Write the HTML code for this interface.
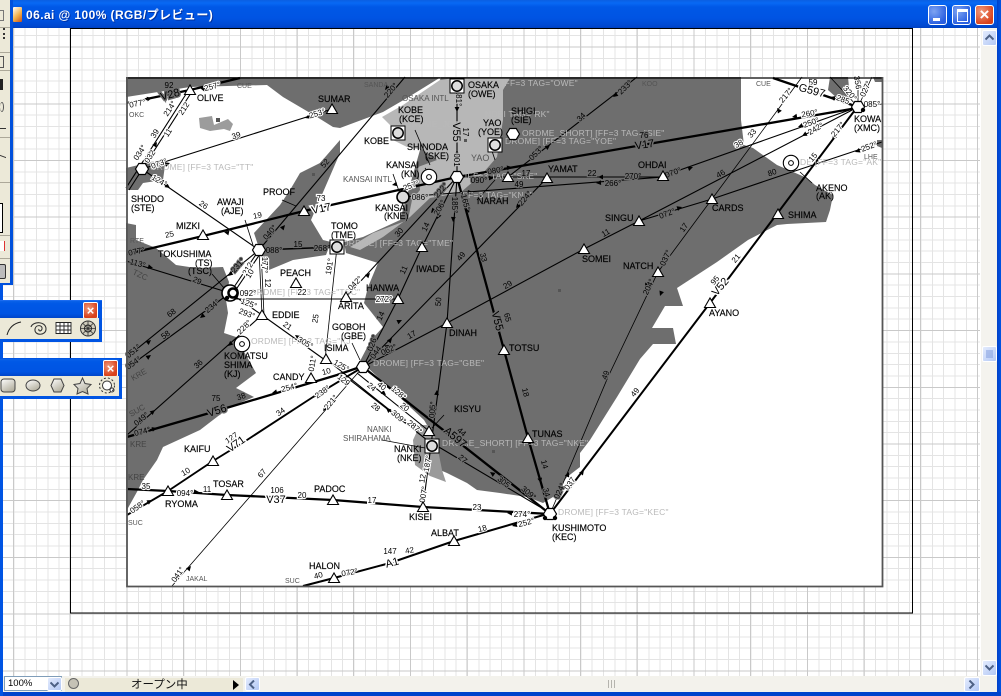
<!DOCTYPE html>
<html><head><meta charset="utf-8"><style>
html,body{margin:0;padding:0;background:#fff}
#r{position:relative;width:1001px;height:696px;overflow:hidden;font-family:"Liberation Sans","Noto Sans CJK JP",sans-serif}
#r>div{position:absolute}
svg{position:absolute;left:0;top:0}
.n{font:9px "Liberation Sans",sans-serif;fill:#000;stroke:#000;stroke-width:.15}
.g{font:8px "Liberation Sans",sans-serif;fill:#555}
.s{font:8px "Liberation Sans",sans-serif;fill:#000;text-anchor:middle;stroke:#fff;stroke-width:2.2;paint-order:stroke}
.v{font:11px "Liberation Sans",sans-serif;fill:#000;text-anchor:middle;stroke:#fff;stroke-width:3;paint-order:stroke}
.d{stroke:#6e6e6e}
.x{font:8.5px "Liberation Sans",sans-serif;fill:#b9b9b9;letter-spacing:.2px}
.th{stroke:#000;stroke-width:2.3;fill:none}
.m{stroke:#000;stroke-width:1.1;fill:none}
.f{stroke:#000;stroke-width:.8;fill:none}
.pt{position:absolute;left:0;background:linear-gradient(#0a62e8,#0058e6 15%,#0054e3 70%,#0042c4);height:18px}
.cl{position:absolute;width:13px;height:15px;border:1px solid #fff;border-radius:2px;background:radial-gradient(circle at 35% 35%,#f09a7c,#d9421c 70%);color:#fff;font:bold 13px/15px "Liberation Sans",sans-serif;text-align:center}
.bt{position:absolute;width:19px;height:20px;border:1px solid #fff;border-radius:3px;box-sizing:border-box}
.sb{position:absolute;border:1px solid #fff;border-radius:2px;background:linear-gradient(135deg,#e3ebfd,#b3c8f5);box-sizing:border-box}
.sb svg{left:2px;top:2px}
</style></head><body><div id="r">
<svg width="1001" height="696" viewBox="0 0 1001 696">
<defs>
<path id="t" d="M-5.500 4.500L0-5 5.500 4.500z" fill="#fff" stroke="#000" stroke-width="1.100"/>
<path id="h" d="M-6.500 0L-3.200-5.500H3.200L6.500 0 3.200 5.500H-3.200z" fill="#fff" stroke="#000" stroke-width="1.200"/>
<path id="a" d="M-5-2.400L0 0-5 2.400z" fill="#000"/>
<g id="c"><circle r="7.700" fill="#fff" stroke="#000" stroke-width="1.100"/><circle r="2.400" fill="none" stroke="#000" stroke-width="1"/></g>
<g id="b"><rect x="-7" y="-7" width="14" height="14" fill="#fff" stroke="#000"/><circle r="5.200" fill="#ddd" stroke="#000" stroke-width="1.500"/></g>
</defs>
<rect width="1001" height="696" fill="#fff"/>
<line x1="2" y1="352" x2="981" y2="352" stroke="#e4e4e4" stroke-width="648" stroke-dasharray="1 10.34" shape-rendering="crispEdges"/>
<line x1="490" y1="23.9" x2="490" y2="676" stroke="#e4e4e4" stroke-width="980" stroke-dasharray="1 10.34" shape-rendering="crispEdges"/>
<line x1="13" y1="352" x2="981" y2="352" stroke="#c9c9c9" stroke-width="648" stroke-dasharray="1 55.7" shape-rendering="crispEdges"/>
<line x1="490" y1="46.6" x2="490" y2="676" stroke="#c9c9c9" stroke-width="980" stroke-dasharray="1 55.7" shape-rendering="crispEdges"/>
<rect x="70.500" y="28.500" width="842" height="584.500" fill="none" stroke="#000" stroke-width="1.200" shape-rendering="crispEdges"/>
<rect x="126" y="77" width="757" height="509" fill="#fff"/>
<g fill="#6e6e6e">
<path d="M741 77L741 120 744 145 753 148 777 165 807 178 815 185 833 195 830 210 826 222 787 224 777 225 748 240 717 262 677 288 683 306 665 306 652 328 673 328 676 344 653 344 640 359 617 397 590 440 580 453 580 467 567 477 553 497 543 503 527 497 500 493 477 490 467 483 447 473 440 470 436 440 424 420 368 368 359 363 371 340 383 327 364 303 368 287 378 263 359 257 346 253 344 242 363 237 400 220 440 80 441 77z"/>
<path d="M126 77H441L407 98 383 112 340 128 333 127 317 117 283 97 267 85 190 87 126 97z"/>
<path d="M126 223L136 225V240L156 248 176 265 196 268 223 267 229 282 226 300 228 313 224 333 236 337 256 373 236 388 254 397 230 407 213 420 200 430 163 447 157 460 143 480 138 490 128 508 126 512z"/>
<path d="M340 140L320 163 300 173 290 190 280 205 254 233 258 245 262 258 269 270 293 260 326 255 331 242 323 240 311 220 340 153z"/>
<path d="M126 168L147 163 166 158 163 180 143 183 138 190 126 190z"/>
<path d="M830 77H848L850 98H837L828 90z"/>
<path d="M873 77H882V82H875z"/>
<path d="M877 140H882V148L877 146z"/>
</g>
<path fill="#b7b7b7" d="M440 80L455 78 510 78 503 90 503 120 497 157 483 173 460 193 430 198 410 217 383 237 360 250 350 247 373 233 408 220 412 200 420 190 418 167 437 160 423 150 407 147 393 140 392 127 382 117 403 105z"/>
<path fill="#9a9a9a" d="M413 440L420 425 430 425 436 440 442 470 446 482 430 476 415 465z"/>
<path fill="#9c9c9c" d="M199 118L212 116 214 125 228 119 233 124 230 131 224 129 210 131 200 128z"/>
<g fill="#555"><rect x="216" y="118" width="4" height="4"/><rect x="312" y="173" width="3" height="3"/><rect x="558" y="289" width="3" height="3"/><rect x="492" y="450" width="3" height="3"/><rect x="464" y="139" width="3" height="3"/></g>
<g>
<path class="th" d="M127 103L190 90 240 78"/>
<path class="m" d="M126 188L188 91M129 190L191 93"/>
<path class="m" d="M142 169L332 109"/>
<path class="m" d="M142 169L259 250"/>
<path class="th" d="M127 254L203 236 304 211 457 177 660 142 857 108"/>
<path class="m" d="M259 250L405 77"/>
<path class="m" d="M126 261L230 293 262 315 325 360"/>
<path class="m" d="M127 357L259 250"/>
<path class="m" d="M127 368L230 293"/>
<path class="m" d="M127 435L262 315"/>
<path class="th" d="M127 437L213 412 337 375 363 366"/>
<path class="th" d="M168 491L213 461 247 440 313 397 363 367" style="stroke-width:1.900"/>
<path class="f" d="M172 586L363 367"/>
<path class="th" d="M127 489L168 491 227 495 333 500 423 507 550 514"/>
<path class="th" d="M127 515L168 491" style="stroke-width:1.900"/>
<path class="th" d="M363 367L550 514"/>
<path class="m" d="M357 373L429 431M350 380L427 440 540 507M326 359L427 440"/>
<path class="m" d="M457 86V177"/>
<path class="th" d="M457 177L504 350 528 438 550 514"/>
<path class="m" d="M457 177L447 323 431 445 423 507"/>
<path class="m" d="M457 177L422 247 398 299 363 367"/>
<path class="m" d="M457 177L346 297"/>
<path class="m" d="M398 299H233"/>
<path class="m" d="M363 367L547 178"/>
<path class="m" d="M363 367L447 323 584 249 639 221"/>
<path class="m" d="M663 176L858 107M639 221L858 107M639 221L712 199 777 177 882 142"/>
<path class="f" d="M550 514L608 377 658 272 712 199 802 77"/>
<path class="th" d="M553 510L710 303 855 110" style="stroke-width:2"/>
<path class="m" d="M508 177L637 77"/>
<path class="m" d="M457 177H663"/>
<path class="m" d="M403 197L663 177"/>
<path class="f" d="M337 247L325 360"/>
<path class="th" d="M259 250L337 247" style="stroke-width:1.500"/>
<path class="f" d="M259 250L262 315M261 250L264 315"/>
<path class="m" d="M259 250L230 293M262 251L233 294"/>
<path class="th" d="M773 78L858 107"/>
<path class="f" d="M858 107L830 77M858 107L858 77M858 107L872 77M858 107L882 104"/>
<path class="th" d="M303 586L334 578 390 563 454 541 547 514" style="stroke-width:2"/>
<path class="f" d="M282 200L296 206M245 220L253 245M212 274L224 288M352 343L360 360M425 168L432 178M405 210L400 197M415 130L430 165M382 440L425 448M444 415L432 428M812 183L800 172M477 200L495 180M393 174L400 194M495 160L490 145"/>
</g>
<g>
<use href="#a" transform="translate(152,98) rotate(-12)"/><use href="#a" transform="translate(200,88) rotate(-166)"/><use href="#a" transform="translate(157,142) rotate(-57)"/><use href="#a" transform="translate(305,118) rotate(162)"/><use href="#a" transform="translate(170,163) rotate(-18)"/><use href="#a" transform="translate(170,188) rotate(35)"/><use href="#a" transform="translate(224,232) rotate(-168)"/><use href="#a" transform="translate(285,225) rotate(-50)"/><use href="#a" transform="translate(153,268) rotate(15)"/><use href="#a" transform="translate(228,276) rotate(140)"/><use href="#a" transform="translate(151,340) rotate(-40)"/><use href="#a" transform="translate(151,355) rotate(-35)"/><use href="#a" transform="translate(200,318) rotate(142)"/><use href="#a" transform="translate(228,346) rotate(138)"/><use href="#a" transform="translate(155,410) rotate(-40)"/><use href="#a" transform="translate(157,428) rotate(-16)"/><use href="#a" transform="translate(272,393) rotate(165)"/><use href="#a" transform="translate(313,397) rotate(146)"/><use href="#a" transform="translate(323,411) rotate(130)"/><use href="#a" transform="translate(191,566) rotate(-50)"/><use href="#a" transform="translate(295,335) rotate(-145)"/><use href="#a" transform="translate(199,492) rotate(3)"/><use href="#a" transform="translate(152,500) rotate(-30)"/><use href="#a" transform="translate(385,90) rotate(130)"/><use href="#a" transform="translate(457,112) rotate(90)"/><use href="#a" transform="translate(457,150) rotate(-90)"/><use href="#a" transform="translate(392,185) rotate(168)"/><use href="#a" transform="translate(431,213) rotate(130)"/><use href="#a" transform="translate(437,219) rotate(117)"/><use href="#a" transform="translate(453,222) rotate(94)"/><use href="#a" transform="translate(469,213) rotate(75)"/><use href="#a" transform="translate(494,178)"/><use href="#a" transform="translate(512,167) rotate(-10)"/><use href="#a" transform="translate(473,192) rotate(-4)"/><use href="#a" transform="translate(516,208) rotate(130)"/><use href="#a" transform="translate(550,145) rotate(-38)"/><use href="#a" transform="translate(613,97) rotate(142)"/><use href="#a" transform="translate(598,177) rotate(180)"/><use href="#a" transform="translate(596,183) rotate(176)"/><use href="#a" transform="translate(693,167) rotate(-20)"/><use href="#a" transform="translate(682,207) rotate(-18)"/><use href="#a" transform="translate(777,108) rotate(-125)"/><use href="#a" transform="translate(792,117) rotate(170)"/><use href="#a" transform="translate(798,127) rotate(160)"/><use href="#a" transform="translate(802,136) rotate(152)"/><use href="#a" transform="translate(832,140) rotate(128)"/><use href="#a" transform="translate(855,152) rotate(160)"/><use href="#a" transform="translate(830,97) rotate(197)"/><use href="#a" transform="translate(660,296) rotate(110)"/><use href="#a" transform="translate(645,288) rotate(118)"/><use href="#a" transform="translate(569,472) rotate(-66)"/><use href="#a" transform="translate(584,470) rotate(-53)"/><use href="#a" transform="translate(490,472) rotate(-145)"/><use href="#a" transform="translate(386,395) rotate(40)"/><use href="#a" transform="translate(386,408) rotate(-140)"/><use href="#a" transform="translate(403,397) rotate(40)"/><use href="#a" transform="translate(437,390) rotate(-85)"/><use href="#a" transform="translate(541,483) rotate(75)"/><use href="#a" transform="translate(507,513) rotate(182)"/><use href="#a" transform="translate(512,526) rotate(165)"/><use href="#a" transform="translate(390,345) rotate(-30)"/><use href="#a" transform="translate(392,338) rotate(-50)"/><use href="#a" transform="translate(402,320) rotate(-25)"/><use href="#a" transform="translate(370,273) rotate(-47)"/><use href="#a" transform="translate(377,299) rotate(180)"/>
</g>
<g class="x">
<text class="x" x="150" y="170">ORDME] [FF=3 TAG="TT"</text>
<text class="x" x="502" y="86">[FF=3 TAG="OWE"</text>
<text class="x" x="405" y="127">ORDME_JCE</text>
<text class="x" x="485" y="117">NDEI TAG="RK"</text>
<text class="x" x="522" y="136">ORDME_SHORT] [FF=3 TAG="SIE"</text>
<text class="x" x="505" y="144">DROME] [FF=3 TAG="YOE"</text>
<text class="x" x="465" y="179">[FF=3 TAG="SKE"</text>
<text class="x" x="460" y="198">[FF=3 TAG="KNE"</text>
<text class="x" x="342" y="246">ORDME] [FF=3 TAG="TME"</text>
<text class="x" x="250" y="295">ORDME] [FF=3 TAG="TSC"</text>
<text class="x" x="251" y="344">ORDME] [FF=3 TAG="KJ"</text>
<text class="x" x="373" y="366">DROME] [FF=3 TAG="GBE"</text>
<text class="x" x="442" y="446">DROME_SHORT] [FF=3 TAG="NKE"</text>
<text class="x" x="558" y="515">DROME] [FF=3 TAG="KEC"</text>
<text class="x" x="800" y="165">DE [FF=3 TAG="AK"</text>
</g>
<g>
<text class="s d" transform="translate(138,106) rotate(-12)" style="stroke:#fff">077°</text><text class="v d" transform="translate(171,98) rotate(-15)">V28</text><text class="s d" x="169" y="88">92</text><text class="s" transform="translate(213,89) rotate(-15)">257°</text><text class="s" transform="translate(172,110) rotate(-57)">214°</text><text class="s" transform="translate(186,110) rotate(-57)">212</text><text class="s" transform="translate(157,135) rotate(-57)">39</text><text class="s" transform="translate(170,134) rotate(-57)">11</text><text class="s" transform="translate(142,154) rotate(-57)">034°</text><text class="s" transform="translate(152,158) rotate(-57)">032</text><text class="s" transform="translate(160,166) rotate(-20)">073°</text><text class="s" transform="translate(237,138) rotate(-18)">39</text><text class="s" transform="translate(318,116) rotate(-18)">253°</text><text class="s" transform="translate(158,183) rotate(30)">124°</text><text class="s" transform="translate(202,207) rotate(35)">26</text><text class="s d" transform="translate(327,165) rotate(-50)">52</text><text class="s" x="321" y="201">73</text><text class="v" transform="translate(322,212) rotate(-12)">V17</text><text class="s" transform="translate(258,218) rotate(-12)">19</text><text class="s" transform="translate(170,237) rotate(-12)">25</text><text class="s d" transform="translate(272,234) rotate(-50)">040°</text>
<text class="s d" transform="translate(137,254) rotate(-12)">077°</text><text class="s d" transform="translate(137,266) rotate(15)">113°</text><text class="s d" transform="translate(196,283) rotate(25)">29</text><text class="s d" transform="translate(240,267) rotate(-50)">231°</text><text class="s" transform="translate(250,270) rotate(-60)">212</text><text class="s" transform="translate(252,275) rotate(-60)">10</text><text class="s" transform="translate(262,265) rotate(90)">177°</text><text class="s" transform="translate(265,283) rotate(90)">12</text><text class="s d" transform="translate(173,315) rotate(-38)">68</text><text class="s d" transform="translate(167,337) rotate(-35)">58</text><text class="s d" transform="translate(135,353) rotate(-40)">051°</text><text class="s d" transform="translate(135,365) rotate(-35)">054°</text><text class="s d" transform="translate(214,308) rotate(-40)">234°</text><text class="s" x="248" y="296">092°</text><text class="s" transform="translate(248,306) rotate(20)">125°</text><text class="s" transform="translate(246,316) rotate(20)">293°</text><text class="s" transform="translate(246,329) rotate(-45)">228°</text><text class="s" x="302" y="295">22</text><text class="s" transform="translate(286,328) rotate(35)">21</text><text class="s" transform="translate(318,319) rotate(-80)">25</text><text class="s" transform="translate(304,345) rotate(30)">305°</text><text class="s" transform="translate(315,364) rotate(-80)">011°</text><text class="s" transform="translate(327,374) rotate(-15)">10</text><text class="s d" transform="translate(200,366) rotate(-42)">36</text><text class="s d" transform="translate(143,421) rotate(-40)">049°</text><text class="s d" transform="translate(143,434) rotate(-15)">074°</text><text class="s d" x="216" y="401">75</text><text class="v d" transform="translate(218,414) rotate(-18)">V56</text><text class="s d" transform="translate(242,399) rotate(-18)">38</text><text class="s" transform="translate(290,390) rotate(-15)">254°</text><text class="s" transform="translate(324,394) rotate(-35)">238°</text><text class="s" transform="translate(333,404) rotate(-50)">221°</text><text class="s" transform="translate(282,414) rotate(-35)">34</text><text class="s" transform="translate(233,440) rotate(-35)">127</text><text class="v" transform="translate(238,447) rotate(-35)">V71</text><text class="s" transform="translate(187,474) rotate(-30)">10</text><text class="s" transform="translate(264,475) rotate(-50)">67</text><text class="s" transform="translate(332,267) rotate(-80)">191°</text><text class="s d" x="274" y="253">088°</text><text class="s d" x="298" y="247">15</text><text class="s d" x="322" y="251">268°</text>
<text class="s d" transform="translate(393,92) rotate(-50)">220°</text><text class="s" style="stroke:#b7b7b7" transform="translate(456,98) rotate(90)">181°</text><text class="v" style="stroke:#b7b7b7" transform="translate(453,132) rotate(90)">V55</text><text class="s" style="stroke:#b7b7b7" transform="translate(463,132) rotate(90)">17</text><text class="s" style="stroke:#b7b7b7" transform="translate(454,160) rotate(90)">001</text><text class="s" transform="translate(412,188) rotate(-20)">257°</text><text class="s" style="stroke:#b7b7b7" x="420" y="200">086°</text><text class="s d" transform="translate(496,173) rotate(-10)">080°</text><text class="s d" x="479" y="183">090°</text><text class="s d" transform="translate(443,192) rotate(-50)">222°</text><text class="s d" transform="translate(442,209) rotate(-60)">206°</text><text class="s d" transform="translate(452,205) rotate(90)">185°</text><text class="s d" transform="translate(463,203) rotate(75)">165°</text><text class="s d" transform="translate(401,234) rotate(-50)">30</text><text class="s d" transform="translate(428,228) rotate(-65)">14</text><text class="s d" transform="translate(463,258) rotate(-50)">49</text><text class="s d" transform="translate(481,258) rotate(75)">33</text><text class="s d" transform="translate(406,271) rotate(-65)">11</text><text class="s" transform="translate(357,285) rotate(-45)">042°</text><text class="s" x="384" y="302">272°</text><text class="s d" transform="translate(538,155) rotate(-45)">053°</text><text class="s d" transform="translate(583,119) rotate(-45)">34</text><text class="s d" transform="translate(627,89) rotate(-45)">233°</text><text class="s d" x="526" y="176">17</text><text class="s d" x="519" y="187">49</text><text class="s d" transform="translate(527,200) rotate(-50)">224°</text><text class="s d" x="592" y="176">22</text><text class="s d" x="633" y="179">270°</text><text class="s d" x="613" y="186">266°</text><text class="s d" x="644" y="138">76</text><text class="v d" transform="translate(645,148) rotate(-8)">V17</text><text class="s d" transform="translate(674,175) rotate(-20)">070°</text><text class="s d" transform="translate(668,216) rotate(-20)">072°</text><text class="s d" transform="translate(607,235) rotate(-30)">11</text><text class="s d" transform="translate(509,287) rotate(-30)">29</text><text class="s d" transform="translate(668,259) rotate(-65)">037°</text><text class="s d" transform="translate(651,288) rotate(-65)">204°</text><text class="s d" transform="translate(441,302) rotate(-85)">50</text>
<text class="s" x="813" y="85">59</text><text class="v" transform="translate(811,94) rotate(15)">G597</text><text class="s" transform="translate(788,97) rotate(-50)">217°</text><text class="s" transform="translate(848,95) rotate(50)">320°</text><text class="s" transform="translate(855,83) rotate(80)">356</text><text class="s" transform="translate(868,90) rotate(-65)">027°</text><text class="s" transform="translate(842,102) rotate(20)">285</text><text class="s" x="872" y="107">085°</text><text class="s" transform="translate(810,116) rotate(-10)">260°</text><text class="s" transform="translate(812,125) rotate(-20)">250°</text><text class="s" transform="translate(817,131) rotate(-30)">242°</text><text class="s" transform="translate(840,131) rotate(-50)">217°</text><text class="s" transform="translate(870,149) rotate(-20)">252°</text><text class="s" transform="translate(754,135) rotate(-50)">33</text><text class="s" transform="translate(740,146) rotate(-30)">38</text><text class="s d" transform="translate(722,176) rotate(-30)">46</text><text class="s d" transform="translate(773,175) rotate(-20)">80</text><text class="s" transform="translate(815,159) rotate(-50)">15</text><text class="s d" transform="translate(686,229) rotate(-55)">17</text>
<text class="s" transform="translate(738,260) rotate(-50)">21</text><text class="s" transform="translate(717,282) rotate(-50)">95</text><text class="v" transform="translate(723,289) rotate(-50)">V52</text><text class="s" transform="translate(637,394) rotate(-50)">49</text><text class="s" transform="translate(572,485) rotate(-55)">037</text><text class="s d" transform="translate(562,492) rotate(-65)">024°</text><text class="s d" transform="translate(608,376) rotate(-70)">49</text>
<text class="s d" transform="translate(375,344) rotate(-70)">026°</text><text class="s d" transform="translate(378,354) rotate(-55)">044</text><text class="s d" transform="translate(390,352) rotate(-25)">062°</text><text class="s d" transform="translate(413,337) rotate(-30)">17</text><text class="s d" transform="translate(383,317) rotate(-65)">14</text><text class="s" transform="translate(340,368) rotate(30)">125°</text><text class="s" transform="translate(342,382) rotate(40)">129</text><text class="s" transform="translate(370,389) rotate(40)">24</text><text class="s" transform="translate(380,388) rotate(40)">40</text><text class="s" transform="translate(397,395) rotate(40)">128°</text><text class="s" transform="translate(403,409) rotate(40)">20</text><text class="s" transform="translate(374,409) rotate(40)">28</text><text class="s" transform="translate(397,419) rotate(40)">309°</text><text class="s" transform="translate(413,429) rotate(40)">287°</text><text class="s d" transform="translate(435,410) rotate(-85)">005°</text><text class="s d" transform="translate(460,434) rotate(40)">44</text><text class="v d" transform="translate(453,440) rotate(40)">A597</text><text class="s d" transform="translate(461,461) rotate(40)">27</text><text class="s d" transform="translate(502,484) rotate(40)">305</text><text class="s d" transform="translate(527,495) rotate(40)">309°</text><text class="v d" transform="translate(494,322) rotate(75)">V55</text><text class="s d" transform="translate(505,318) rotate(75)">65</text><text class="s d" transform="translate(523,393) rotate(75)">18</text><text class="s d" transform="translate(542,465) rotate(75)">14</text><text class="s d" transform="translate(544,493) rotate(75)">34</text><text class="s" transform="translate(430,464) rotate(-80)">187°</text><text class="s" transform="translate(425,479) rotate(-80)">12</text><text class="s" transform="translate(426,495) rotate(-80)">007°</text><text class="s" x="302" y="498">20</text><text class="s" x="372" y="503">17</text><text class="s" x="477" y="510">23</text><text class="s" x="522" y="517">274°</text><text class="s" transform="translate(527,525) rotate(-15)">252°</text><text class="s" transform="translate(483,531) rotate(-15)">18</text>
<text class="s" x="146" y="489">35</text><text class="s" x="185" y="496">094°</text><text class="s" x="207" y="492">11</text><text class="s" x="277" y="493">106</text><text class="v" x="276" y="503">V37</text><text class="s" transform="translate(139,509) rotate(-35)">058°</text><text class="s" transform="translate(180,576) rotate(-55)">041°</text><text class="s" transform="translate(319,578) rotate(-15)">40</text><text class="s" transform="translate(350,575) rotate(-10)">072°</text><text class="v" transform="translate(393,566) rotate(-15)">A1</text><text class="s" x="390" y="554">147</text><text class="s" transform="translate(410,553) rotate(-10)">42</text>
</g>
<g>
<use href="#t" x="190" y="90"/><use href="#t" x="332" y="109"/><use href="#t" x="304" y="211"/><use href="#t" x="203" y="235"/><use href="#t" x="296" y="283"/><use href="#t" x="262" y="315"/><use href="#t" x="326" y="359"/><use href="#t" x="311" y="378"/><use href="#t" x="346" y="297"/><use href="#t" x="398" y="299"/><use href="#t" x="422" y="247"/><use href="#t" x="508" y="177"/><use href="#t" x="547" y="178"/><use href="#t" x="663" y="176"/><use href="#t" x="639" y="221"/><use href="#t" x="584" y="249"/><use href="#t" x="658" y="272"/><use href="#t" x="712" y="199"/><use href="#t" x="778" y="214"/><use href="#t" x="447" y="323"/><use href="#t" x="504" y="350"/><use href="#t" x="528" y="438"/><use href="#t" x="429" y="431"/><use href="#t" x="423" y="507"/><use href="#t" x="333" y="500"/><use href="#t" x="227" y="495"/><use href="#t" x="168" y="491"/><use href="#t" x="213" y="461"/><use href="#t" x="454" y="541"/><use href="#t" x="334" y="578"/><use href="#t" x="710" y="303"/>
<use href="#h" x="142" y="169"/><use href="#h" x="259" y="250"/><use href="#h" x="363" y="367"/><use href="#h" x="457" y="177"/><use href="#h" x="513" y="134"/><use href="#h" x="858" y="107"/><use href="#h" x="550" y="514"/>
<use href="#c" x="429" y="177"/><use href="#c" x="791" y="163"/><use href="#c" x="242" y="344"/>
<use href="#b" x="398" y="133"/><use href="#b" x="457" y="86"/><use href="#b" x="495" y="145"/><use href="#b" x="432" y="446"/><use href="#b" x="337" y="247"/>
<circle cx="403" cy="197" r="6" fill="#ddd" stroke="#000" stroke-width="1.600"/>
<circle cx="230" cy="293" r="8" fill="#fff" stroke="#000" stroke-width="1.600"/><circle cx="233" cy="293" r="4.500" fill="#fff" stroke="#000" stroke-width="2.500"/><circle cx="227" cy="298" r="2.200"/>
<circle cx="863" cy="110" r="2.200"/><circle cx="545" cy="518" r="2.200"/><circle cx="555" cy="518" r="2.200"/>
</g>
<g>
<text class="n" x="197" y="101">OLIVE</text><text class="n" x="318" y="102">SUMAR</text><text class="n" x="131" y="202">SHODO</text><text class="n" x="131" y="211">(STE)</text><text class="n" x="217" y="205">AWAJI</text><text class="n" x="221" y="214">(AJE)</text><text class="n" x="263" y="195">PROOF</text><text class="n" x="176" y="229">MIZKI</text><text class="n" x="331" y="229">TOMO</text><text class="n" x="331" y="238">(TME)</text><text class="n" x="158" y="257">TOKUSHIMA</text><text class="n" x="195" y="266">(TS)</text><text class="n" x="188" y="274">(TSC)</text><text class="n" x="280" y="276">PEACH</text><text class="n" x="272" y="318">EDDIE</text><text class="n" x="224" y="359">KOMATSU</text><text class="n" x="224" y="368">SHIMA</text><text class="n" x="224" y="377">(KJ)</text><text class="n" x="324" y="351">ISIMA</text><text class="n" x="273" y="380">CANDY</text><text class="n" x="184" y="452">KAIFU</text><text class="n" x="332" y="330">GOBOH</text><text class="n" x="341" y="339">(GBE)</text><text class="n" x="338" y="309">ARITA</text><text class="n" x="366" y="291">HANWA</text><text class="n" x="416" y="272">IWADE</text><text class="n" x="386" y="168">KANSAI</text><text class="n" x="401" y="177">(KN)</text><text class="n" x="375" y="211">KANSAI</text><text class="n" x="384" y="219">(KNE)</text><text class="n" x="398" y="113">KOBE</text><text class="n" x="399" y="122">(KCE)</text><text class="n" x="364" y="144">KOBE</text><text class="n" x="468" y="88">OSAKA</text><text class="n" x="468" y="97">(OWE)</text><text class="n" x="407" y="150">SHINODA</text><text class="n" x="425" y="159">(SKE)</text><text class="n" x="511" y="114">SHIGI</text><text class="n" x="511" y="123">(SIE)</text><text class="n" x="483" y="126">YAO</text><text class="n" x="478" y="135">(YOE)</text><text class="n" x="477" y="204">NARAH</text><text class="n" x="548" y="172">YAMAT</text><text class="n" x="638" y="168">OHDAI</text><text class="n" x="605" y="221">SINGU</text><text class="n" x="582" y="262">SOMEI</text><text class="n" x="623" y="269">NATCH</text><text class="n" x="854" y="122">KOWA</text><text class="n" x="854" y="131">(XMC)</text><text class="n" x="816" y="191">AKENO</text><text class="n" x="816" y="199">(AK)</text><text class="n" x="712" y="211">CARDS</text><text class="n" x="788" y="218">SHIMA</text><text class="n" x="709" y="316">AYANO</text><text class="n" x="449" y="336">DINAH</text><text class="n" x="509" y="351">TOTSU</text><text class="n" x="532" y="437">TUNAS</text><text class="n" x="454" y="412">KISYU</text><text class="n" x="394" y="452">NANKI</text><text class="n" x="397" y="461">(NKE)</text><text class="n" x="314" y="492">PADOC</text><text class="n" x="409" y="520">KISEI</text><text class="n" x="431" y="536">ALBAT</text><text class="n" x="552" y="531">KUSHIMOTO</text><text class="n" x="552" y="540">(KEC)</text><text class="n" x="213" y="487">TOSAR</text><text class="n" x="165" y="507">RYOMA</text><text class="n" x="309" y="569">HALON</text>
<text class="g" x="364" y="87" style="font-size:7px">SANDA</text><text class="g" x="402" y="101">OSAKA INTL</text><text class="g" x="471" y="161" style="font-size:9px">YAO</text><text class="g" x="343" y="182">KANSAI INTL</text><text class="g" x="642" y="86" style="font-size:7px">KOO</text><text class="g" x="756" y="86" style="font-size:7px">CUE</text><text class="g" x="864" y="159" style="font-size:7px">LHE</text><text class="g" x="367" y="432">NANKI</text><text class="g" x="343" y="441">SHIRAHAMA</text><text class="g" x="128" y="525" style="font-size:7px">SUC</text><text class="g" x="186" y="581" style="font-size:7px">JAKAL</text><text class="g" x="285" y="583" style="font-size:7px">SUC</text><text class="g" x="129" y="117" style="font-size:7px">OKC</text><text class="g" x="237" y="88" style="font-size:7px">CUE</text><text class="g" x="130" y="243" style="font-size:7px">RTE</text>
<text class="g" style="fill:#444" transform="translate(132,274) rotate(25)">TZC</text><text class="g" style="fill:#444" transform="translate(133,381) rotate(-30)">KRE</text><text class="g" style="fill:#444" transform="translate(131,417) rotate(-30)">SUC</text><text class="g" style="fill:#444" x="130" y="447">KRE</text><text class="g" style="fill:#444" x="128" y="480">KRE</text>
</g>
<path d="M126 78H883" stroke="#000" stroke-width="1.300" fill="none"/><path d="M127 77V586.500H882.500V77" stroke="#555" stroke-width="1.800" fill="none"/>
</svg>
<!-- title bar -->
<div style="left:0;top:0;width:1001px;height:28px;background:linear-gradient(#0a5fe2,#0869f4 3px,#0058e6 7px,#0054e3 18px,#0048d0 26px,#0040c0)"></div>
<div style="left:13px;top:7px;width:9px;height:15px;background:linear-gradient(135deg,#fff,#f2b04a 55%,#c8501a);border-radius:1px"></div>
<div style="left:26px;top:7px;color:#fff;font-size:12px;line-height:16px;font-weight:bold;letter-spacing:.42px;white-space:nowrap;text-shadow:1px 1px 0 #0030a0">06.ai @ 100% (RGB/プレビュー)</div>
<div class="bt" style="left:928px;top:5px;background:radial-gradient(circle at 30% 30%,#7fa4f2,#2a5fe0 75%)"><div style="position:absolute;left:4px;top:12px;width:7px;height:3px;background:#fff"></div></div>
<div class="bt" style="left:952px;top:5px;background:radial-gradient(circle at 30% 30%,#7fa4f2,#2a5fe0 75%)"><div style="position:absolute;left:4px;top:3px;width:9px;height:9px;border:1px solid #fff;border-top-width:3px"></div></div>
<div class="bt" style="left:975px;top:5px;background:radial-gradient(circle at 30% 30%,#f09a7c,#d9421c 75%);color:#fff;font:bold 17px/18px 'Liberation Sans',sans-serif;text-align:center">×</div>
<!-- right scrollbar -->
<div style="left:981px;top:28px;width:16px;height:649px;background:#f4f3ee"></div>
<div class="sb" style="left:982px;top:30px;width:15px;height:16px"><svg width="9" height="9" viewBox="0 0 9 9"><path d="M.5 6.500L4.500 2.500 8.500 6.500" fill="none" stroke="#4d6185" stroke-width="2"/></svg></div>
<div class="sb" style="left:982px;top:346px;width:15px;height:16px"><svg width="9" height="10" viewBox="0 0 9 10"><path d="M1 2H8M1 4H8M1 6H8M1 8H8" stroke="#7f9bdc" stroke-width="1"/></svg></div>
<div class="sb" style="left:982px;top:660px;width:15px;height:16px"><svg width="9" height="9" viewBox="0 0 9 9"><path d="M.5 2.500L4.500 6.500 8.500 2.500" fill="none" stroke="#4d6185" stroke-width="2"/></svg></div>
<div style="left:997px;top:0;width:4px;height:696px;background:linear-gradient(90deg,#0040c8,#0054e3)"></div>
<!-- bottom bar -->
<div style="left:0;top:676px;width:997px;height:16px;background:#f3f2ec"></div>
<div style="left:0;top:692px;width:1001px;height:4px;background:#0044cc"></div>
<div style="left:0;top:285px;width:3px;height:411px;background:#0054e3"></div>
<div style="left:4px;top:676px;width:58px;height:15px;border:1px solid #7f9db9;box-sizing:border-box;background:#fff;font-size:9.500px;line-height:13px;padding-left:3px;color:#000">100%</div>
<div class="sb" style="left:47px;top:677px;width:15px;height:14px"><svg width="9" height="9" viewBox="0 0 9 9"><path d="M.5 2.500L4.500 6.500 8.500 2.500" fill="none" stroke="#4d6185" stroke-width="2"/></svg></div>
<div style="left:65px;top:678px;width:178px;height:14px;background:#ece9d8"></div>
<div style="left:68px;top:678px;width:11px;height:11px;border-radius:50%;background:#c5c2b5;border:1px solid #666;box-sizing:border-box"></div>
<div style="left:131px;top:678px;font-size:11.500px;line-height:14px;color:#111;white-space:nowrap">オープン中</div>
<div style="left:233px;top:680px;width:0;height:0;border-left:6px solid #000;border-top:5px solid transparent;border-bottom:5px solid transparent"></div>
<div class="sb" style="left:245px;top:677px;width:15px;height:14px"><svg width="9" height="9" viewBox="0 0 9 9"><path d="M6 .5L2 4.500 6 8.500" fill="none" stroke="#4d6185" stroke-width="2"/></svg></div>
<div style="left:608px;top:680px;width:9px;height:8px;background:repeating-linear-gradient(90deg,#b5b4ae 0 1px,transparent 1px 3px)"></div>
<div class="sb" style="left:964px;top:677px;width:16px;height:15px"><svg width="9" height="9" viewBox="0 0 9 9"><path d="M2.500 .5L6.500 4.500 2.500 8.500" fill="none" stroke="#4d6185" stroke-width="2"/></svg></div>
<!-- toolbox -->
<div style="left:0;top:0;width:10px;height:283px;background:#ece9d8"></div>
<div style="left:10px;top:0;width:3px;height:285px;background:#0050dc"></div>
<div style="left:0;top:283px;width:13px;height:2px;background:#0050dc"></div>
<div style="left:0;top:27px;width:10px;height:1px;background:#aca899"></div>
<div style="left:0;top:52px;width:10px;height:1px;background:#aca899"></div>
<div style="left:0;top:70px;width:10px;height:1px;background:#aca899"></div>
<div style="left:0;top:137px;width:10px;height:1px;background:#aca899"></div>
<div style="left:0;top:182px;width:10px;height:1px;background:#aca899"></div>
<div style="left:0;top:235px;width:10px;height:1px;background:#aca899"></div>
<div style="left:0;top:258px;width:10px;height:1px;background:#aca899"></div>
<div style="left:0;top:79px;width:3px;height:11px;background:#222"></div>
<div style="left:0;top:203px;width:2px;height:28px;border:1px solid #000;background:#fff;border-left:0"></div>
<div style="left:0;top:241px;width:4px;height:10px;background:#fff;border-right:1px solid #d33"></div>
<div style="left:0;top:264px;width:5px;height:13px;background:#bbb;border:1px solid #333;border-left:0;border-radius:0 2px 2px 0"></div>
<div style="left:0;top:10px;width:3px;height:9px;border:1px solid #777;border-left:0"></div>
<div style="left:1px;top:28px;width:2px;height:11px;border-right:2px dotted #333"></div>
<div style="left:0;top:56px;width:3px;height:10px;border:1px solid #555;border-left:0"></div>
<div style="left:0;top:102px;width:3px;height:8px;border:1px solid #555;border-radius:50%;border-left:0"></div>
<div style="left:0;top:128px;width:6px;height:1px;background:#333"></div>
<div style="left:0;top:150px;width:6px;height:6px;border-bottom:1px solid #333;border-left:0;transform:skewY(20deg)"></div>
<!-- palette 1 -->
<div style="left:0;top:300px;width:102px;height:42px;background:#0054e3;border-top:1px solid #1c6cf0;box-sizing:border-box"></div>
<div class="pt" style="top:301px;width:99px"></div>
<div class="cl" style="left:83px;top:302px">×</div>
<div style="left:0;top:318px;width:99px;height:21px;background:#ece9d8"></div>
<svg style="left:0;top:318px" width="100" height="22" viewBox="0 0 100 22">
<path d="M7 17Q10 6 21 4" fill="none" stroke="#222" stroke-width="1"/>
<path d="M31 9C33 3 46 3 46 11 46 18 34 18 35 11 36 6 43 7 42 11 41 14 38 13 39 11" fill="none" stroke="#333" stroke-width="1.100"/>
<path d="M56 4.500H71V15.500H56zM56 8H71M56 12H71M60 4.500V15.500M64 4.500V15.500M68 4.500V15.500" fill="#fff" stroke="#222" stroke-width=".9"/>
<circle cx="88" cy="10.500" r="7.500" fill="#d0ccbc" stroke="#333"/><path d="M88 3V18M80.500 10.500H95.500M83 5.500L93 15.500M93 5.500L83 15.500" stroke="#333" stroke-width=".8"/><circle cx="88" cy="10.500" r="3.500" fill="none" stroke="#222"/>
</svg>
<!-- palette 2 -->
<div style="left:0;top:358px;width:122px;height:41px;background:#0054e3;box-sizing:border-box"></div>
<div class="pt" style="top:359px;width:119px"></div>
<div class="cl" style="left:103px;top:360px">×</div>
<div style="left:0;top:376px;width:119px;height:20px;background:#ece9d8"></div>
<svg style="left:0;top:376px" width="120" height="22" viewBox="0 0 120 22">
<defs><linearGradient id="gb" x1="0" y1="0" x2=".6" y2="1"><stop offset="0" stop-color="#fff"/><stop offset="1" stop-color="#b5b1a0"/></linearGradient></defs>
<rect x="1" y="3" width="14" height="13" rx="3" fill="url(#gb)" stroke="#444"/>
<ellipse cx="33" cy="9.500" rx="7" ry="5.500" fill="url(#gb)" stroke="#444"/>
<path d="M51 9.500L54 3H61L64 9.500 61 16H54z" fill="url(#gb)" stroke="#444"/>
<path d="M82.500 2L85 7.500 91 8.500 87 12.500 88 18 82.500 15.500 77 18 78 12.500 74 8.500 80 7.500z" fill="url(#gb)" stroke="#444"/>
<circle cx="107" cy="9.500" r="4.500" fill="#fff" stroke="#333"/><circle cx="112" cy="14" r="2" fill="#fff" stroke="#333"/><circle cx="107" cy="9.500" r="7.500" fill="none" stroke="#333" stroke-dasharray="2 2"/>
</svg>
</div></body></html>
